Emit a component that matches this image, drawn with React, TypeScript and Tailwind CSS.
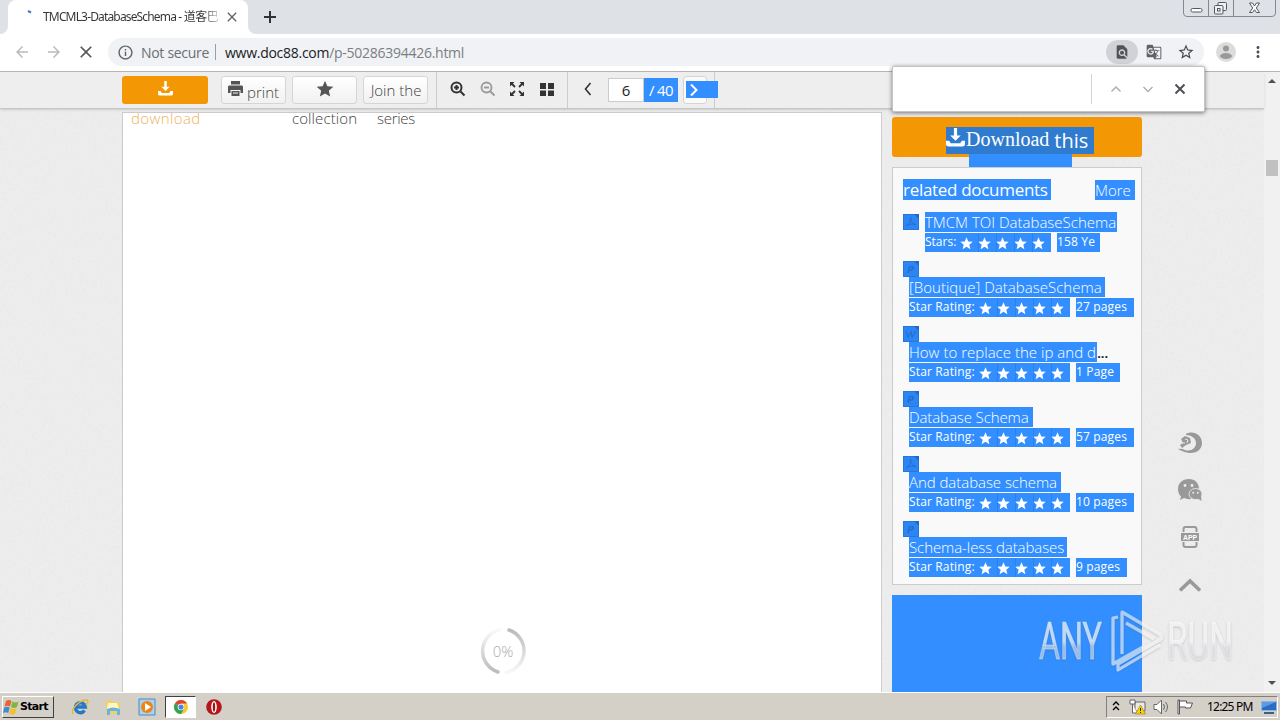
import type { ReactNode } from 'react';
import {
  MdArrowBack,
  MdArrowForward,
  MdClose,
  MdFindInPage,
  MdGTranslate,
  MdInfoOutline,
  MdMoreVert,
  MdStar,
  MdStarBorder,
} from 'react-icons/md';

type Doc = {
  title: string;
  label: string;
  pages: string;
  kind: 'pdf' | 'ppt' | 'doc';
  titleClass: string;
  pagesClass: string;
  clipped?: boolean;
};

const docs: Doc[] = [
  { title: '[Boutique] DatabaseSchema', label: 'Star Rating:', pages: '27 pages', kind: 'ppt', titleClass: 'w-[196px] tracking-[0.02px]', pagesClass: 'w-[58px]' },
  { title: 'How to replace the ip and d', label: 'Star Rating:', pages: '1 Page', kind: 'doc', titleClass: 'w-[188px] tracking-[0.02px]', pagesClass: 'w-[44px]', clipped: true },
  { title: 'Database Schema', label: 'Star Rating:', pages: '57 pages', kind: 'ppt', titleClass: 'w-[124px] tracking-[-0.1px]', pagesClass: 'w-[58px]' },
  { title: 'And database schema', label: 'Star Rating:', pages: '10 pages', kind: 'pdf', titleClass: 'w-[152px] tracking-[-0.05px]', pagesClass: 'w-[58px]' },
  { title: 'Schema-less databases', label: 'Star Rating:', pages: '9 pages', kind: 'ppt', titleClass: 'w-[158px] tracking-[-0.08px]', pagesClass: 'w-[51px]' },
];

function DownloadIcon({ className }: { className: string }) {
  return (
    <svg viewBox="0 0 18 18" className={className} fill="currentColor">
      <path d="M7.500 0h3v7H14l-5 5-5-5h3.500z" />
      <path d="M0 12h3l1.500 2.500h9L15 12h3v3.500q0 2-2 2H2q-2 0-2-2z" />
    </svg>
  );
}

function DocIcon({ kind }: { kind: Doc['kind'] }) {
  return (
    <svg viewBox="0 0 16 16" className="block size-4 shrink-0" fill="none">
      <path d="M0 0h16v16H0z" fill="#2c85f3" />
      <path d="M.5 .5h11l4 4v11H.5z" stroke="#2677dc" />
      <path d="M11 0h5v5z" fill="#2268c8" />
      {kind === 'pdf' && <path d="M3 12c3-1 5-5 4.500-9C8 8 10 10 13 10.500 9 9.500 6 10 3 12" stroke="#226fd4" />}
      {kind === 'ppt' && <path d="M5 12l1.500-6c5-2 5 3 0 3" stroke="#2470d2" strokeWidth="1.700" />}
      {kind === 'doc' && <path d="M3 5l2 6 3-5 1 5 4-6" stroke="#226fd4" strokeWidth="1.200" />}
    </svg>
  );
}

function Stars() {
  return (
    <span className="flex h-[19px] w-[90px] items-center bg-[#338fff]">
      {[0, 1, 2, 3, 4].map((n) => (
        <span key={n} className="flex h-[19px] w-[18px] items-center border-r border-[#2881f0] pt-[2px] last:border-r-0">
          <MdStar className="-ml-[2px] size-[15px] shrink-0 text-white" />
        </span>
      ))}
    </span>
  );
}

function Rating({ label, pages, labelClass, pagesClass }: { label: string; pages: string; labelClass: string; pagesClass: string }) {
  return (
    <div className="mt-px flex h-[19px] text-[12px] leading-[18px] font-normal text-white">
      <span className={`${labelClass} bg-[#338fff] whitespace-nowrap`}>{label}</span>
      <Stars />
      <span className={`${pagesClass} ml-[6px] bg-[#338fff] tracking-[0.15px] whitespace-nowrap`}>{pages}</span>
    </div>
  );
}

function ToolButton({ children, below }: { children: ReactNode; below?: ReactNode }) {
  return (
    <div className="relative mr-[6px] flex h-7 w-[65px] items-center justify-center rounded-[3px] border border-[#d5d5d5] bg-gradient-to-b from-white to-[#f1f1f1]">
      {children}
      {below}
    </div>
  );
}

function Chevron({ d, className }: { d: string; className: string }) {
  return (
    <svg viewBox="0 0 16 16" className={className} fill="none" stroke="currentColor">
      <path d={d} />
    </svg>
  );
}

function Browser() {
  return (
    <>
      {/* Tab strip */}
      <div className="flex h-[34px] shrink-0 bg-[#dee1e6]">
        <div className="h-[34px] w-2 bg-white">
          <div className="h-full w-full rounded-br-lg bg-[#dee1e6]" />
        </div>
        <div className="flex h-[34px] w-[240px] items-center rounded-t-lg bg-white">
          <svg viewBox="0 0 16 16" className="ml-[14px] size-4">
            <path d="M6 2l3 1.500" stroke="#4277c8" strokeWidth="2" />
          </svg>
          <span className="ml-[5px] w-[177px] bg-gradient-to-r from-[#333] from-90% to-[#e5e5e5] bg-clip-text font-['Noto_Sans','Noto_Sans_CJK_SC',sans-serif] text-[12px] tracking-[-0.84px] whitespace-nowrap text-transparent">
            TMCML3-DatabaseSchema - <span className="tracking-[-0.5px]">道客巴巴</span>
          </span>
          <MdClose className="ml-[4px] size-4 shrink-0 text-[#5f6368]" />
        </div>
        <div className="h-[34px] w-2 bg-white">
          <div className="h-full w-full rounded-bl-lg bg-[#dee1e6]" />
        </div>
        <svg viewBox="0 0 12 12" className="mt-[11px] ml-[8px] size-3" stroke="#2f3237" strokeWidth="2">
          <path d="M6 0v12M0 6h12" />
        </svg>
        <svg viewBox="0 0 94 17" className="mr-[4px] ml-auto h-[17px] w-[94px]" fill="none" stroke="#85898f">
          <path d="M1.500 0v13q0 3.500 3.500 3.500h85q3.500 0 3.500-3.500V0M26.500 0v16M51.500 0v16" />
          <rect x="9" y="8.500" width="11" height="3.500" rx="1.500" stroke="#54585e" fill="#fff" />
          <g stroke="#54585e" fill="#eef0f3">
            <rect x="36" y="2.500" width="8.500" height="8" rx="1" />
            <rect x="32.500" y="5.500" width="8.500" height="8.500" rx="1" />
            <rect x="35.500" y="8.500" width="2.500" height="2.500" />
          </g>
          <path d="M67.500 3h3l2 3 2-3h3l-3.200 5 3.200 4.500h-3l-2-2.800-2 2.800h-3l3.200-4.500z" stroke="#54585e" fill="#fff" />
        </svg>
      </div>

      {/* Address bar */}
      <div className="flex h-[38px] shrink-0 items-center border-b border-[#b5b5b5] bg-white pb-px">
        <MdArrowBack className="ml-[13px] size-[18px] text-[#b9bbbe]" />
        <MdArrowForward className="ml-[14px] size-[18px] text-[#b9bbbe]" />
        <MdClose className="ml-[13px] size-[20px] text-[#55585c]" />
        <div className="ml-[12px] flex h-7 w-[1096px] items-center rounded-full bg-[#f0f2f5] font-['Open_Sans',sans-serif] text-[14px]">
          <MdInfoOutline className="ml-[9px] size-[17px] text-[#5f6368]" />
          <span className="ml-[7px] w-[67px] tracking-[-0.3px] whitespace-nowrap text-[#6b6e72]">Not secure</span>
          <span className="ml-[7px] h-4 w-px bg-[#9a9da1]" />
          <span className="ml-[9px] tracking-[-0.27px] whitespace-nowrap text-[#7b7e82]">
            <span className="text-[#202124]">www.doc88.com</span>/p-50286394426.html
          </span>
          <span className="ml-auto flex h-6 w-8 items-center justify-center rounded-full bg-[#d0d2d5]">
            <MdFindInPage className="size-4 text-[#50545a]" />
          </span>
          <MdGTranslate className="ml-2 size-4 text-[#5f6368]" />
          <MdStarBorder className="mr-[9px] ml-[15px] size-[18px] text-[#45494e]" />
        </div>
        <svg viewBox="0 0 20 20" className="ml-[12px] size-5">
          <circle cx="10" cy="10" r="10" fill="#dcdcdc" />
          <circle cx="10" cy="6.500" r="3" fill="#999" />
          <ellipse cx="10" cy="14" rx="6" ry="3" fill="#999" />
        </svg>
        <MdMoreVert className="ml-[13px] size-[18px] text-[#4c4f54]" />
      </div>
    </>
  );
}

function Toolbar() {
  return (
    <div className="relative z-10 flex h-[37px] shrink-0 items-center border-b border-[#c6c6c6] bg-[#eee] pl-[122px] text-[#444] shadow-sm">
      <div className="relative mr-[13px] flex h-7 w-[86px] items-center justify-center rounded-[3px] bg-[#f39804] text-white">
        <DownloadIcon className="mb-[3px] size-[15px]" />
        <span className="absolute top-[33px] left-[9px] text-[15px] leading-[18px] tracking-[0.4px] text-[#efb25e]">download</span>
      </div>
      <ToolButton>
        <svg viewBox="0 0 15 15" className="mb-[4px] size-[15px]" fill="#555">
          <path d="M3 0h9v3.500H3zM1 4.500h13l1 1V12h-2.500V9h-10v3H0V5.500zM3.500 10h8v5h-8zm1.500 1.500v1h5v-1z" fillRule="evenodd" />
        </svg>
        <span className="mt-[5px] ml-[4px] text-[15px]">print</span>
      </ToolButton>
      <ToolButton below={<span className="absolute top-[30px] -left-px text-[15px] tracking-[0.1px]">collection</span>}>
        <MdStar className="mb-[3px] size-[20px] text-[#555]" />
      </ToolButton>
      <ToolButton below={<span className="absolute top-[30px] left-[13px] text-[15px] tracking-[-0.3px]">series</span>}>
        <span className="ml-px text-[15px] whitespace-nowrap">Join the</span>
      </ToolButton>
      <span className="ml-[2px] h-9 w-px bg-[#ccc]" />
      <svg viewBox="0 0 16 16" className="mb-[2px] ml-[13px] size-4" fill="none" stroke="#333" strokeWidth="2">
        <circle cx="6.500" cy="6.500" r="5" />
        <path d="M10.500 10.500l4 4M4 6.500h5M6.500 4v5" />
      </svg>
      <svg viewBox="0 0 16 16" className="mb-[2px] ml-[14px] size-4" fill="none" stroke="#999" strokeWidth="1.800">
        <circle cx="6.500" cy="6.500" r="5" />
        <path d="M10.500 10.500l4 4M4 6.500h5" />
      </svg>
      <svg viewBox="0 0 16 16" className="mb-[2px] ml-[13px] size-4" fill="#333" stroke="#333" strokeWidth="1.800">
        <path d="M2 2l4 4M14 2l-4 4M2 14l4-4M14 14l-4-4" />
        <path d="M1 1h4.500L1 5.500zM15 1v4.500L10.500 1zM1 15v-4.500L5.500 15zM15 15h-4.500l4.500-4.500z" stroke="none" />
      </svg>
      <svg viewBox="0 0 14 13" className="mb-[2px] ml-[15px] h-[13px] w-[14px]" fill="#333">
        <path d="M0 0h6v6H0zM8 0h6v6H8zM0 7.500h6V13H0zM8 7.500h6V13H8z" />
      </svg>
      <span className="ml-[13px] h-9 w-px bg-[#ccc]" />
      <Chevron d="M10.500 2L5.500 8l5 6" className="mb-[2px] ml-[12px] size-4 stroke-[1.600] text-[#333]" />
      <span className="ml-[12px] flex h-6 w-9 items-center justify-center border border-[#ccc] bg-white pt-px text-[15px] font-normal text-[#222]">6</span>
      <span className="flex h-6 w-[34px] items-center justify-center bg-[#338fff] pt-px text-[15px] font-normal tracking-[-0.6px] whitespace-nowrap text-white">/ 40</span>
      <span className="relative ml-[5px] h-7 w-6 rounded-[3px] border border-[#d5d5d5] bg-[#fafafa]">
        <span className="absolute top-[4px] left-[2px] flex h-[17px] w-8 items-center bg-[#338fff]">
          <Chevron d="M5 2.500L10.500 8 5 13.500" className="size-4 stroke-[2] text-white" />
        </span>
      </span>
      <span className="ml-[7px] h-9 w-px bg-[#ccc]" />
    </div>
  );
}

function Sidebar() {
  return (
    <div className="ml-[10px] w-[250px] shrink-0 pt-2">
      <div className="relative flex h-10 justify-center rounded-[3px] bg-[#f39804]">
        <div className="mt-[10px] ml-[6px] flex h-[27px] w-[148px] bg-[#2f7bd0] text-white">
          <DownloadIcon className="mt-px size-[19px]" />
          <span className="ml-px font-['Liberation_Serif',serif] text-[20px] leading-[24px]">Download</span>
          <span className="ml-[5px] text-[20px] leading-[27px] font-normal">this</span>
        </div>
        <div className="absolute top-[37px] left-[77px] h-[13px] w-[103px] bg-[#338fff]" />
      </div>
      <div className="mt-[10px] h-[418px] border border-[#ccc] bg-[#f9f9f9] pl-[10px] font-light">
        <div className="mt-[11px] flex h-[21px] items-end text-white">
          <span className="h-[21px] w-[148px] bg-[#338fff] text-[17px] leading-[21px] font-normal tracking-[-0.3px] whitespace-nowrap">related documents</span>
          <span className="ml-[44px] h-5 w-10 bg-[#338fff] text-[15px] leading-5">More</span>
        </div>
        <div className="mt-[12px] flex">
          <div className="mt-[2px]">
            <DocIcon kind="pdf" />
          </div>
          <div className="ml-[6px]">
            <div className="h-5 w-[192px] bg-[#338fff] text-[15px] leading-5 whitespace-nowrap text-white">TMCM TOI DatabaseSchema</div>
            <Rating label="Stars:" pages="158 Ye" labelClass="w-[36px]" pagesClass="w-[43px]" />
          </div>
        </div>
        {docs.map((doc) => (
          <div key={doc.title} className="mt-[9px]">
            <DocIcon kind={doc.kind} />
            <div className="ml-[6px]">
              <div className="flex">
                <span className={`${doc.titleClass} h-5 bg-[#338fff] text-[15px] leading-5 whitespace-nowrap text-white`}>{doc.title}</span>
                {doc.clipped && <span className="text-[15px] leading-5 font-semibold tracking-[-0.5px] text-[#222]">...</span>}
              </div>
              <Rating label={doc.label} pages={doc.pages} labelClass="w-[71px] tracking-[0.15px]" pagesClass={doc.pagesClass} />
            </div>
          </div>
        ))}
      </div>
      <div className="mt-[10px] h-[100px] bg-[#338fff]" />
    </div>
  );
}

function SideRail() {
  return (
    <div className="ml-[35px] flex w-[26px] flex-col items-center pt-[322px] text-[#999]">
      <svg viewBox="0 0 26 24" className="h-6 w-[26px]">
        <path d="M9 3C15-1 25 3 25 12S14 26 1 18q3-1 7 1c6 2 11-2 11-7S14 4 9 4z" fill="currentColor" />
        <path d="M4 8l4-3 5 2 1 5-5 2-4 3-2-3 3-2z" fill="currentColor" />
        <path d="M8 8l3 1-1 3M5 12h3" stroke="#e8e8e8" fill="none" />
      </svg>
      {/* WeChat */}
      <svg viewBox="0 0 26 24" className="mt-[23px] h-6 w-[26px]" fill="currentColor">
        <path d="M12 1C5 1 1 5.500 1 11c0 3 1 5.500 3 7.500L3 22l4-2q3 1.500 7 1c-3-6 1-11 8-10C22 5 18 1 12 1z" />
        <ellipse cx="18.500" cy="16" rx="6.500" ry="5.500" stroke="#ececec" strokeWidth=".8" />
        <path d="M20 20l4.500 3-.5-5z" />
        <g fill="#ececec">
          <circle cx="8" cy="7.500" r="1.400" />
          <circle cx="15" cy="7.500" r="1.400" />
          <circle cx="16.200" cy="14.800" r="1" />
          <circle cx="20.800" cy="14.800" r="1" />
        </g>
      </svg>
      <svg viewBox="0 0 20 22" className="mt-[24px] h-[22px] w-5" fill="none">
        <path d="M3.500 6V3q0-2 2-2h9q2 0 2 2v3M3.500 16v3q0 2 2 2h9q2 0 2-2v-3" stroke="currentColor" strokeWidth="2" />
        <rect x="1" y="7" width="18" height="8" fill="currentColor" />
        <text x="3" y="14" fontSize="7.500" textLength="14" lengthAdjust="spacingAndGlyphs" fontWeight="700" fontFamily="Liberation Sans, sans-serif" fill="#fff">APP</text>
      </svg>
      <svg viewBox="0 0 22 14" className="mt-[30px] h-[14px] w-[22px]" fill="none" stroke="currentColor" strokeWidth="3.500">
        <path d="M1 12.500L11 3l10 9.500" />
      </svg>
    </div>
  );
}

function Watermark() {
  return (
    <svg viewBox="0 0 204 66" className="absolute top-[608px] left-[1036px] z-20 h-[66px] w-[204px]">
      <defs>
        <linearGradient id="mark" x1="0" y1="0" x2="0" y2="1">
          <stop offset="0.500" stopColor="#fff" stopOpacity="0.65" />
          <stop offset="0.600" stopColor="#dfe3ea" stopOpacity="0.55" />
        </linearGradient>
        <filter id="soft">
          <feDropShadow dx="0" dy="1" stdDeviation="1.200" floodColor="#555" floodOpacity="0.45" />
        </filter>
      </defs>
      <g filter="url(#soft)">
        <g fontFamily="Roboto, sans-serif" fontSize="51" fill="url(#mark)" stroke="#fff" strokeOpacity="0.3" strokeWidth="1">
          <text x="3" y="51" textLength="63" lengthAdjust="spacingAndGlyphs">ANY</text>
          <text x="131" y="51" textLength="66" lengthAdjust="spacingAndGlyphs">RUN</text>
        </g>
        <path d="M82 9l-5 1v46l30-17M86 46V4l39 23v4L82 56v6l42-25M90 15l28 16" fill="none" stroke="#fff" strokeOpacity="0.55" strokeWidth="3.200" strokeLinejoin="round" />
      </g>
    </svg>
  );
}

function FindBar() {
  return (
    <div className="absolute top-[66px] left-[892px] z-30 flex h-[46px] w-[313px] items-center rounded-[2px] border border-[#c4c4c4] bg-white shadow-[0_1px_4px_rgba(0,0,0,0.5)]">
      <span className="ml-[198px] h-[30px] w-px bg-[#d5d5d5]" />
      <Chevron d="M3.500 10.500L8 6l4.500 4.500" className="ml-4 size-4 stroke-[1.500] text-[#b0b0b0]" />
      <Chevron d="M3.500 6L8 10.500 12.500 6" className="ml-4 size-4 stroke-[1.500] text-[#b0b0b0]" />
      <Chevron d="M3.500 3.500l9 9M12.500 3.500l-9 9" className="ml-4 size-4 stroke-[2] text-[#4c4f54]" />
    </div>
  );
}

function Taskbar() {
  return (
    <div className="relative z-10 flex h-7 shrink-0 items-center border-t border-white bg-[#d4d0c8] font-['DejaVu_Sans',sans-serif] text-[11px] text-black">
      <div className="mt-px ml-[2px] flex h-[22px] w-[52px] items-center border border-t-white border-r-[#404040] border-b-[#404040] border-l-white">
        <svg viewBox="0 0 17 16" className="h-4 w-[17px] shrink-0">
          <path d="M3 2q3-2 5.500 0L7 7.500Q4.500 6 1.500 7.500z" fill="#e8642c" />
          <path d="M9.500 2.500q3 2 6 0L14 8q-3 2-6 0z" fill="#7db83b" />
          <path d="M1.200 8.500q3-1.500 5.500 0L5.200 14Q3 12.500 0 14z" fill="#3d8bd4" />
          <path d="M7.700 9q3 2 6 0l-1.500 5.500q-3 2-6 0z" fill="#f6bf27" />
        </svg>
        <span className="text-[11px] font-bold tracking-[-0.7px]">Start</span>
      </div>
      <svg viewBox="0 0 18 18" className="ml-[17px] size-[18px]" fill="none">
        <path d="M13.500 12.500a5 5 0 1 1 .800-3.500H5" stroke="#2878c8" strokeWidth="3.400" />
        <path d="M2 16C-1 11 10 1 16 2c2 1 0 4-1 5" stroke="#e4b83a" strokeWidth="1.500" />
      </svg>
      <svg viewBox="0 0 18 18" className="ml-[15px] size-[18px]">
        <path d="M2 2h5l1 2h8v12H2z" fill="#ecd071" />
        <path d="M4 5h9l2 6H3z" fill="#fff6c4" />
        <path d="M3 17v-6q6-3 13 0v6h-3v-4H6v4z" fill="#69b4df" />
      </svg>
      <svg viewBox="0 0 18 18" className="ml-[16px] size-[18px]">
        <path d="M1 1h16v16H1z" fill="#a8d2f2" stroke="#4b8abe" />
        <circle cx="9" cy="9" r="6" fill="#ef8314" />
        <path d="M7 5l6 4-6 4z" fill="#fff" />
      </svg>
      <div className="ml-[9px] flex h-[22px] w-[31px] items-center justify-center border border-t-[#404040] border-r-white border-b-white border-l-[#404040] bg-white">
        <svg viewBox="0 0 16 16" className="size-[14px]">
          <circle cx="8" cy="8" r="8" fill="#f7c928" />
          <path d="M8 8L1.070 4A8 8 0 0 1 14.930 4H8z" fill="#df4332" />
          <path d="M8 8L1.070 4A8 8 0 0 0 8 16l3.500-6z" fill="#34a153" />
          <circle cx="8" cy="8" r="3.800" fill="#fff" />
          <circle cx="8" cy="8" r="2.900" fill="#4284ee" />
        </svg>
      </div>
      <svg viewBox="0 0 16 16" className="ml-[10px] size-4">
        <circle cx="8" cy="8" r="7.800" fill="#b3171b" />
        <ellipse cx="8" cy="8" rx="2.800" ry="6" fill="#fff" />
        <ellipse cx="8" cy="8" rx="1.200" ry="4.800" fill="#a01015" />
      </svg>
      <div className="mt-px mr-[2px] ml-auto flex h-[22px] w-[172px] items-center border border-t-[#808080] border-r-white border-b-white border-l-[#808080]">
        <svg viewBox="0 0 8 10" className="mb-[3px] ml-[5px] h-[10px] w-2" fill="none" stroke="#000" strokeWidth="1.300">
          <path d="M1 4l3-3 3 3M1 9l3-3 3 3" />
        </svg>
        <svg viewBox="0 0 17 16" className="ml-[9px] h-4 w-[17px]" fill="none">
          <path d="M6 3h10v9H6z" fill="#e9e9e9" stroke="#666" />
          <path d="M1 1h5v4H1zM3.500 5v9H8" fill="#fff" stroke="#666" />
          <path d="M11.500 6l5 9h-10z" fill="#f4d20d" stroke="#a98d00" strokeWidth=".7" />
          <path d="M11.500 9v3M11.500 13v1" stroke="#222" />
        </svg>
        <svg viewBox="0 0 17 16" className="ml-[7px] h-4 w-[17px]" fill="none" stroke="#666">
          <path d="M1 5.500h3L8.500 1v14L4 10.500H1z" fill="#fff" />
          <path d="M10.500 5q2 3 0 6M12.500 3q4 5 0 10" />
        </svg>
        <svg viewBox="0 0 17 16" className="ml-[7px] h-4 w-[17px]" fill="#fff" stroke="#555">
          <path d="M1 1h1.500v14H1zM2.500 2h7v2h6l-2 5h-5V8h-6z" />
        </svg>
        <span className="ml-[13px] w-[47px] font-['Noto_Sans',sans-serif] text-[12px] tracking-[-0.8px] whitespace-nowrap">12:25 PM</span>
        <svg viewBox="0 0 16 15" className="ml-[7px] h-[15px] w-4">
          <path d="M.5 1.500h15v9H.5z" fill="#286ec8" stroke="#8bb6e3" />
          <path d="M1 2l14 0-14 6z" fill="#5c9be4" />
          <path d="M3 12h10v2H3z" fill="#455e7c" />
        </svg>
      </div>
    </div>
  );
}

export default function App() {
  return (
    <div className="relative flex h-[720px] w-[1280px] flex-col overflow-hidden bg-white font-['Open_Sans',sans-serif]">
      <Browser />
      <div className="flex h-[620px] shrink-0 overflow-hidden">
        <div className="relative flex h-full w-[1264px] flex-col bg-[#eee] font-light">
          {/* Paper grain */}
          <svg className="absolute inset-0 size-full opacity-[0.07]">
            <filter id="grain">
              <feTurbulence type="fractalNoise" baseFrequency="0.35" numOctaves="2" />
              <feColorMatrix type="saturate" values="0" />
            </filter>
            <rect width="100%" height="100%" filter="url(#grain)" />
          </svg>
          <Toolbar />
          <div className="relative flex h-[583px] pl-[122px]">
            <div className="mt-[3px] flex h-[600px] w-[760px] shrink-0 justify-center border border-[#ccc] bg-white">
              <div className="relative mt-[513px] ml-[2px] flex size-[50px] items-center justify-center">
                <svg viewBox="0 0 50 50" className="absolute inset-0 size-full" fill="none" strokeWidth="3.500" strokeLinecap="round">
                  <defs>
                    <linearGradient id="arcA" x1="0" y1="0" x2="0" y2="1">
                      <stop stopColor="#bbb" />
                      <stop offset="1" stopColor="#f8f8f8" />
                    </linearGradient>
                    <linearGradient id="arcB" x1="0" y1="0" x2="0" y2="1">
                      <stop stopColor="#fafafa" />
                      <stop offset="1" stopColor="#bbb" />
                    </linearGradient>
                  </defs>
                  <path d="M31 4A22 22 0 0 1 28 46.500" stroke="url(#arcA)" />
                  <path d="M20 46A22 22 0 0 1 22 3.500" stroke="url(#arcB)" />
                </svg>
                <span className="relative text-[15px] text-[#aaa]">0%</span>
              </div>
            </div>
            <Sidebar />
            <SideRail />
          </div>
        </div>
        {/* Scrollbar */}
        <div className="flex w-4 flex-col items-center bg-[#f1f1f1]">
          <svg viewBox="0 0 8 4" className="mt-[7px] h-1 w-2" fill="#505050">
            <path d="M0 4l4-4 4 4z" />
          </svg>
          <div className="mt-[77px] h-4 w-3 bg-[#c1c1c1]" />
          <svg viewBox="0 0 8 4" className="mt-auto mb-[7px] h-1 w-2" fill="#505050">
            <path d="M0 0h8L4 4z" />
          </svg>
        </div>
      </div>
      <Taskbar />
      <FindBar />
      <Watermark />
    </div>
  );
}
